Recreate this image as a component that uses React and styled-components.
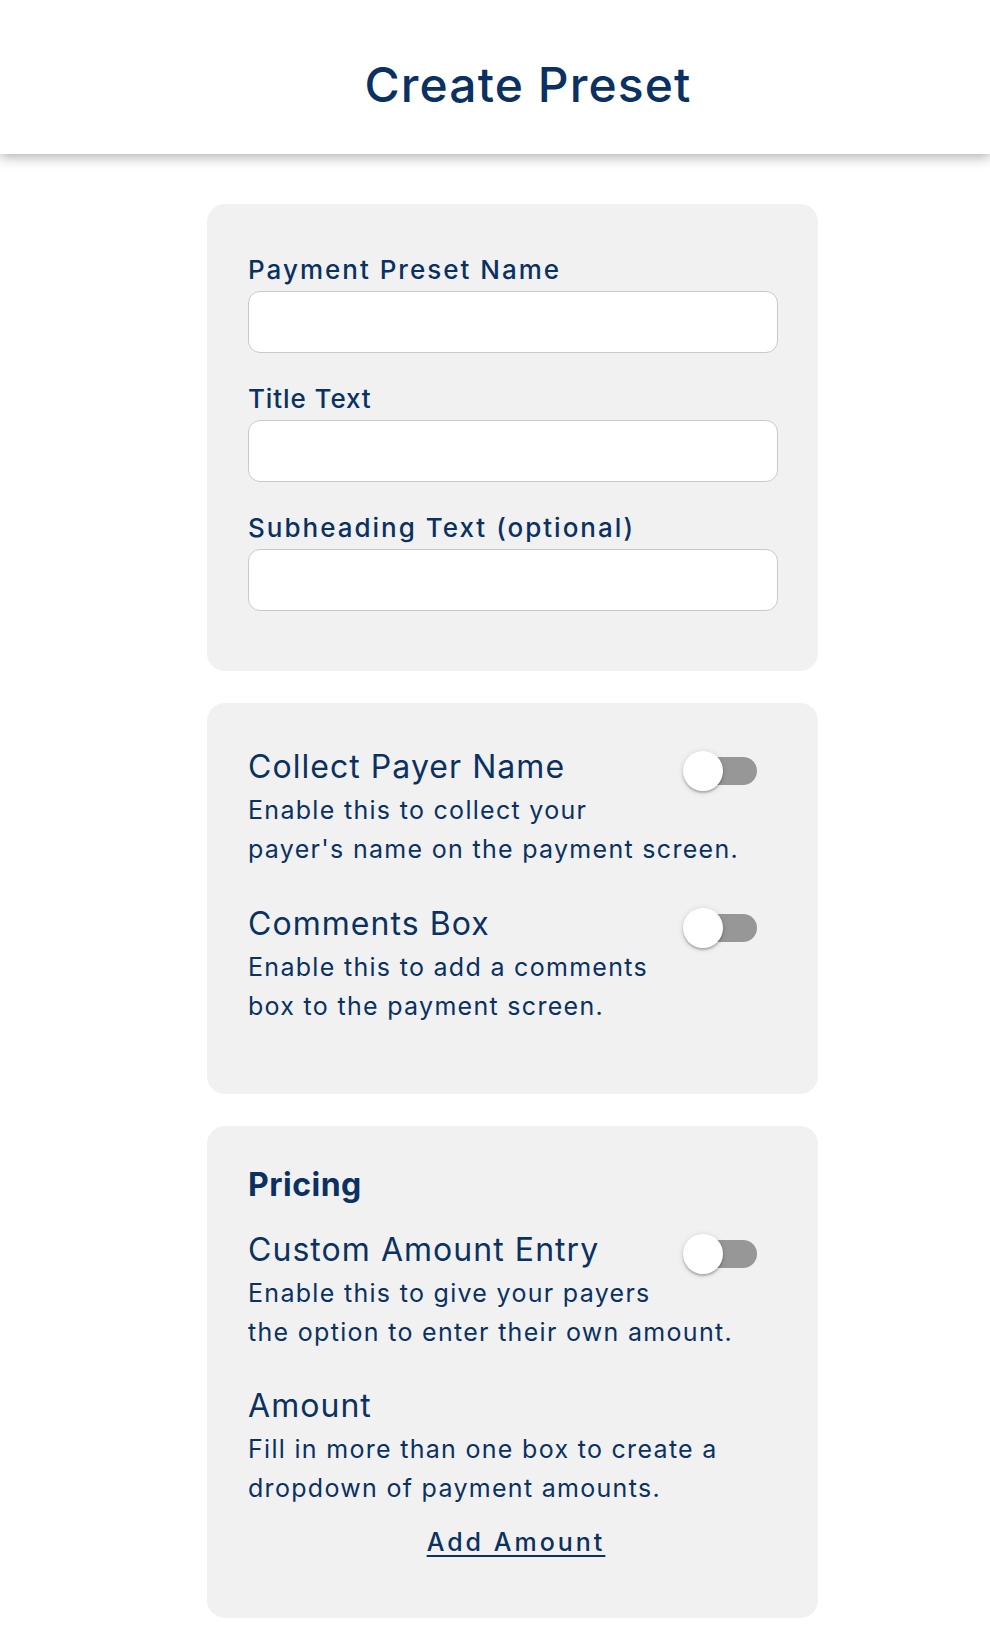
import React from "react";
import styled, { createGlobalStyle } from "styled-components";

const GlobalStyle = createGlobalStyle`
  html, body {
    margin: 0;
    padding: 0;
    background: #ffffff;
  }
  body {
    font-family: Inter, "Open Sans", "Noto Sans", sans-serif;
    color: #0a3162;
  }
  * { box-sizing: border-box; }
`;

const NAVY = "#0a3162";

const Header = styled.header`
  height: 154px;
  background: #fff;
  box-shadow: 0 3px 12px rgba(0, 0, 0, 0.32);
  display: flex;
  justify-content: center;
  align-items: flex-start;
  padding: 56px 0 0 66px;
  position: relative;
  z-index: 1;
`;

const Title = styled.h1`
  margin: 0;
  font-size: 48px;
  line-height: 58px;
  font-weight: 500;
  letter-spacing: 1.1px;
  color: ${NAVY};
`;

const Main = styled.main`
  display: flex;
  flex-direction: column;
  align-items: center;
  gap: 32px;
  padding: 50px 0 31px 35px;
`;

const Card = styled.section`
  width: 611px;
  background: #f1f1f1;
  border-radius: 18px;
  padding: ${(p) => p.$pad || "50px 40px 60px 41px"};
  display: flex;
  flex-direction: column;
`;

const Field = styled.label`
  display: flex;
  flex-direction: column;
  & + & {
    margin-top: 30px;
  }
`;

const FieldLabel = styled.span`
  font-size: 26px;
  line-height: 32px;
  font-weight: 500;
  letter-spacing: ${(p) => p.$ls || "2px"};
  color: ${NAVY};
  margin-bottom: 5px;
`;

const TextInput = styled.input`
  height: 62px;
  width: 100%;
  border: 1.5px solid #c9c9c9;
  border-radius: 12px;
  background: #fff;
  font-family: inherit;
  font-size: 22px;
  padding: 0 16px;
  color: ${NAVY};
  outline: none;
`;

const Option = styled.div`
  display: flex;
  flex-direction: column;
  margin-top: ${(p) => p.$mt || "0px"};
`;

const OptionRow = styled.div`
  display: flex;
  justify-content: space-between;
  align-items: flex-start;
  min-height: 44px;
`;

const OptionTitle = styled.h3`
  margin: 0;
  font-size: 32px;
  line-height: 40px;
  font-weight: 400;
  letter-spacing: 1.05px;
  color: ${NAVY};
`;

const SectionTitle = styled.h2`
  margin: 0;
  font-size: 32px;
  line-height: 40px;
  font-weight: 750;
  letter-spacing: 0.5px;
  color: ${NAVY};
`;

const Description = styled.p`
  margin: 0;
  font-size: 25px;
  line-height: 39px;
  font-weight: 400;
  letter-spacing: 1.3px;
  color: ${NAVY};
`;

const SwitchWrap = styled.span`
  position: relative;
  display: inline-block;
  width: 74px;
  height: 40px;
  margin: 4px 21px 0 0;
  flex-shrink: 0;
  cursor: pointer;
`;

const SwitchTrack = styled.span`
  position: absolute;
  left: 6px;
  top: 6px;
  width: 68px;
  height: 28px;
  border-radius: 14px;
  background: #979797;
`;

const SwitchThumb = styled.span`
  position: absolute;
  left: ${(p) => (p.$on ? "34px" : "0px")};
  top: 0;
  width: 40px;
  height: 40px;
  border-radius: 50%;
  background: #ffffff;
  box-shadow: 0 2px 2px rgba(0, 0, 0, 0.22), 0 1px 6px rgba(0, 0, 0, 0.14);
`;

const LinkButton = styled.button`
  align-self: center;
  margin-top: 19px;
  margin-left: 6px;
  background: none;
  border: none;
  padding: 0;
  font-family: inherit;
  font-size: 25px;
  line-height: 30px;
  font-weight: 500;
  letter-spacing: 3px;
  color: ${NAVY};
  text-decoration: underline;
  text-decoration-thickness: 2px;
  text-underline-offset: 4px;
  cursor: pointer;
`;

function Switch({ on }) {
  return (
    <SwitchWrap role="switch" aria-checked={on ? "true" : "false"}>
      <SwitchTrack />
      <SwitchThumb $on={on} />
    </SwitchWrap>
  );
}

export default function App() {
  return (
    <>
      <GlobalStyle />
      <Header>
        <Title>Create Preset</Title>
      </Header>
      <Main>
        <Card>
          <Field>
            <FieldLabel>Payment Preset Name</FieldLabel>
            <TextInput type="text" />
          </Field>
          <Field>
            <FieldLabel $ls="0.9px">Title Text</FieldLabel>
            <TextInput type="text" />
          </Field>
          <Field>
            <FieldLabel>Subheading Text (optional)</FieldLabel>
            <TextInput type="text" />
          </Field>
        </Card>

        <Card $pad="44px 40px 68px 41px">
          <Option>
            <OptionRow>
              <OptionTitle>Collect Payer Name</OptionTitle>
              <Switch />
            </OptionRow>
            <Description>
              Enable this to collect your
              <br />
              payer's name on the payment screen.
            </Description>
          </Option>
          <Option $mt="35px">
            <OptionRow>
              <OptionTitle>Comments Box</OptionTitle>
              <Switch />
            </OptionRow>
            <Description>
              Enable this to add a comments
              <br />
              box to the payment screen.
            </Description>
          </Option>
        </Card>

        <Card $pad="39px 40px 61px 41px">
          <SectionTitle>Pricing</SectionTitle>
          <Option $mt="25px">
            <OptionRow>
              <OptionTitle>Custom Amount Entry</OptionTitle>
              <Switch />
            </OptionRow>
            <Description>
              Enable this to give your payers
              <br />
              the option to enter their own amount.
            </Description>
          </Option>
          <Option $mt="34px">
            <OptionRow>
              <OptionTitle>Amount</OptionTitle>
            </OptionRow>
            <Description>
              Fill in more than one box to create a
              <br />
              dropdown of payment amounts.
            </Description>
          </Option>
          <LinkButton type="button">Add Amount</LinkButton>
        </Card>
      </Main>
    </>
  );
}
